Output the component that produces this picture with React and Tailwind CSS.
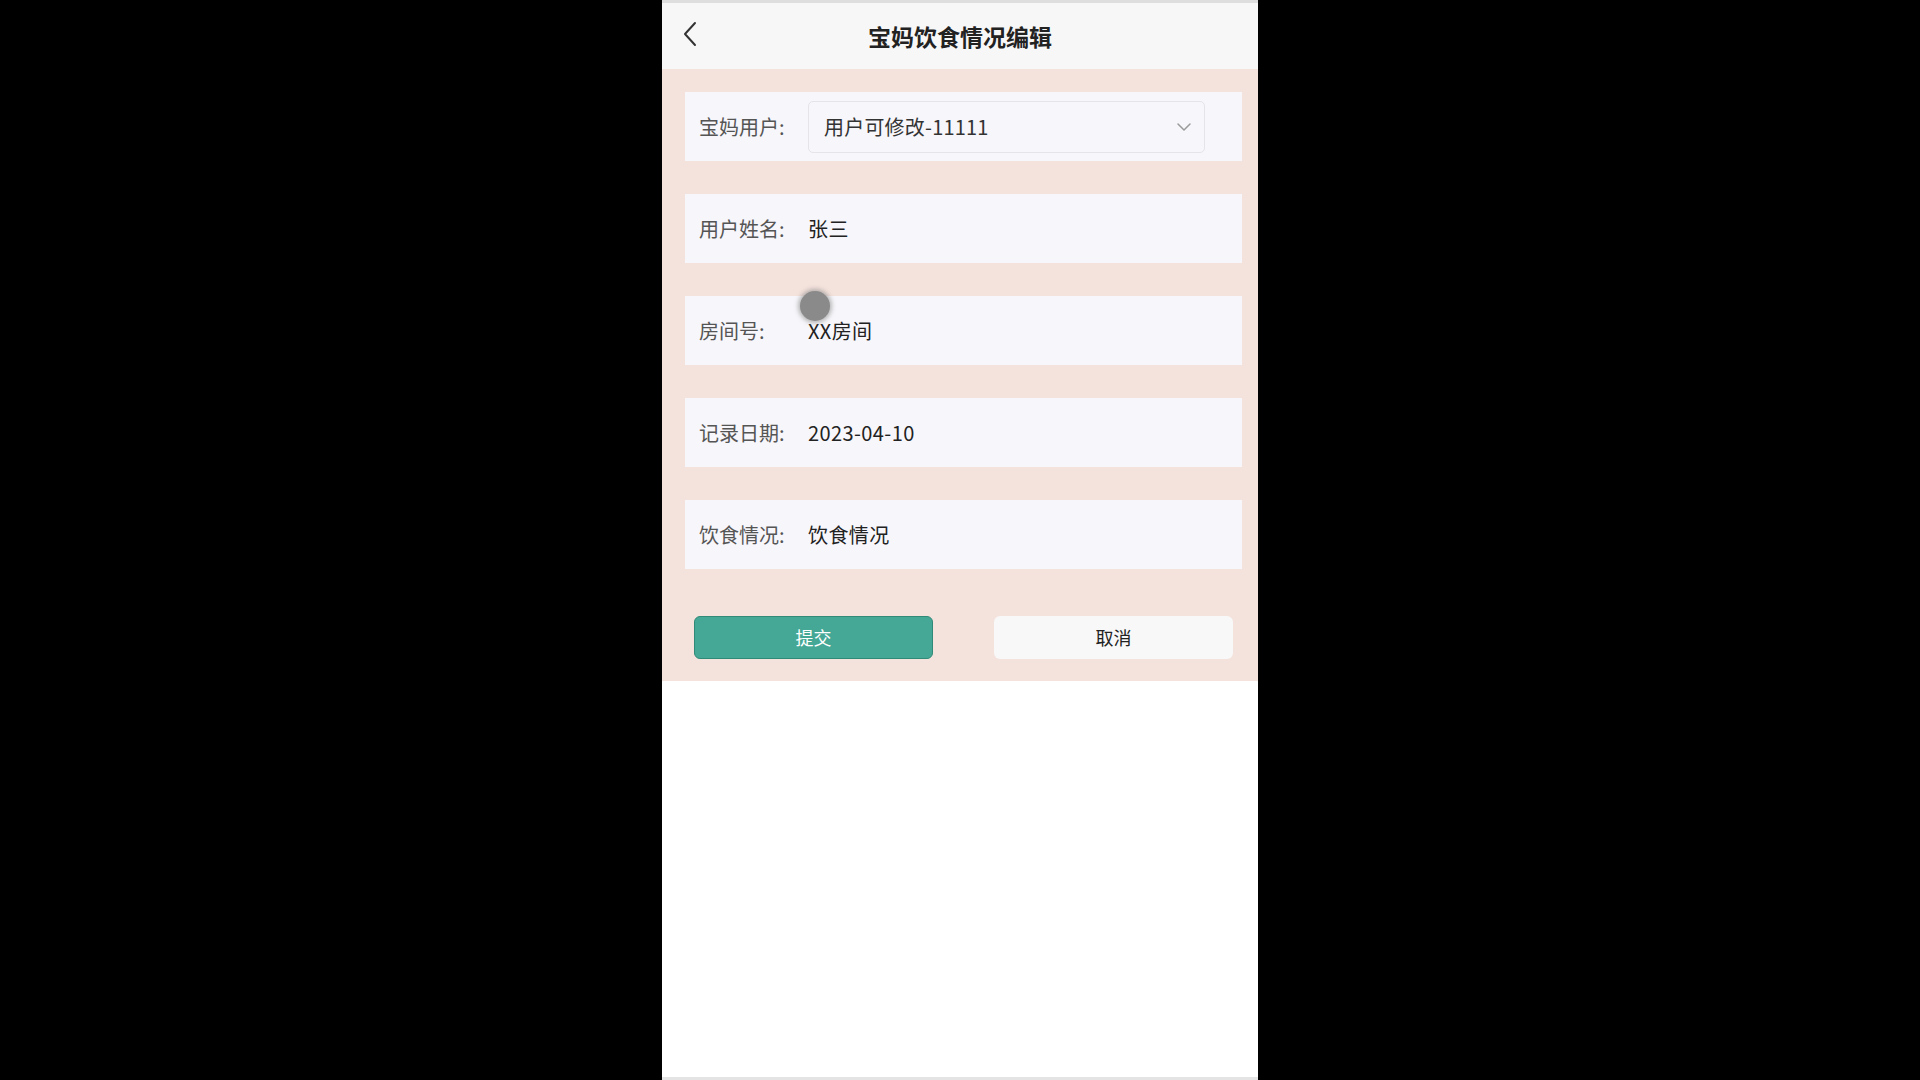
import React from "react";

const rows = [
  { label: "用户姓名:", value: "张三" },
  { label: "房间号:", value: "XX房间" },
  { label: "记录日期:", value: "2023-04-10" },
  { label: "饮食情况:", value: "饮食情况" }
];

function FormRow({ label, children }) {
  return (
    <div className="mb-[33px] flex h-[69px] items-center bg-[#f7f6fa] pl-[14px]">
      <div className="w-[109px] shrink-0 text-[20px] text-[#555]">{label}</div>
      {children}
    </div>
  );
}

export default function App() {
  return (
    <div className="flex h-screen w-full justify-center bg-black font-['Noto_Sans_CJK_SC',sans-serif]">
      <div className="relative flex w-[596px] flex-col bg-white">
        <div className="h-[3px] bg-[#dedede]" />
        <header className="relative flex h-[66px] items-center justify-center bg-[#f7f7f7]">
          <svg
            className="absolute left-[20px] top-[18px]"
            width="16"
            height="26"
            viewBox="0 0 16 26"
            fill="none"
          >
            <polyline
              points="13,2 3,13 13,24"
              stroke="#333"
              strokeWidth="2"
              strokeLinecap="round"
              strokeLinejoin="round"
            />
          </svg>
          <h1 className="text-[23px] font-bold text-[#222]">宝妈饮食情况编辑</h1>
        </header>

        <main className="bg-[#f4e2dc] pb-[22px] pl-[23px] pr-[16px] pt-[23px]">
          <FormRow label="宝妈用户:">
            <div className="flex h-[52px] w-[397px] items-center justify-between rounded-[5px] border border-[#e6e4e8] pl-[15px] pr-[12px]">
              <span className="text-[20px] tracking-[0.01em] text-[#333]">用户可修改-11111</span>
              <svg width="16" height="10" viewBox="0 0 16 10" fill="none">
                <polyline
                  points="2,2 8,8 14,2"
                  stroke="#9a9a9a"
                  strokeWidth="1.5"
                  strokeLinecap="round"
                  strokeLinejoin="round"
                />
              </svg>
            </div>
          </FormRow>

          {rows.map((row) => (
            <FormRow key={row.label} label={row.label}>
              <span className="text-[20px] tracking-[0.02em] text-[#222]">{row.value}</span>
            </FormRow>
          ))}

          <div className="mt-[47px] flex justify-between px-[9px]">
            <button className="h-[43px] w-[239px] rounded-[6px] border border-[#2f8a78] bg-[#45a896] text-[18px] text-white">
              提交
            </button>
            <button className="h-[43px] w-[239px] rounded-[6px] bg-[#f8f8f8] text-[18px] text-[#222]">
              取消
            </button>
          </div>
        </main>

        <div className="flex-1" />
        <div className="h-[3px] bg-[#e4e4e4]" />

        <div className="absolute left-[138px] top-[291px] h-[30px] w-[30px] rounded-full bg-[#8a8a8a] shadow-[0_0_4px_2px_rgba(138,138,138,0.6)]" />
      </div>
    </div>
  );
}
